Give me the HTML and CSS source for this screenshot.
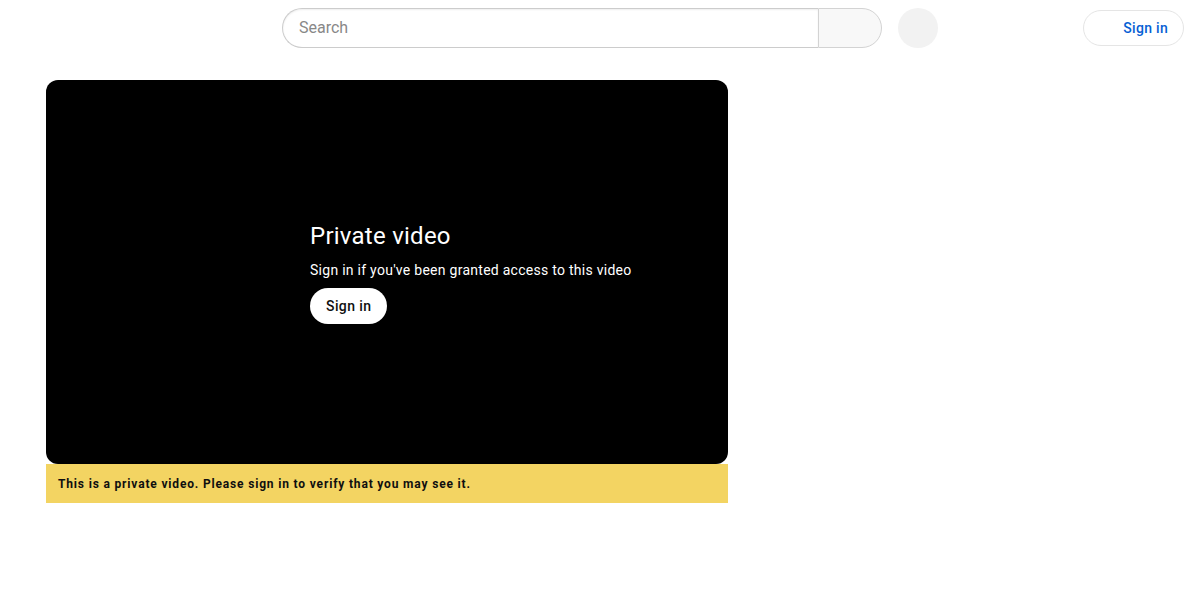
FILE: index.html
```html
<!DOCTYPE html>
<html lang="en">
<head>
<meta charset="utf-8">
<title>Private video</title>
<link rel="stylesheet" href="styles.css">
</head>
<body>
<header class="masthead">
  <div class="start"></div>
  <div class="center">
    <form class="search">
      <input class="search-input" type="text" placeholder="Search">
      <button class="search-btn" type="button"></button>
    </form>
    <button class="mic" type="button"></button>
  </div>
  <div class="spacer"></div>
  <a class="signin-top" href="#">Sign in</a>
</header>
<main class="page">
  <div class="player">
    <div class="error">
      <div class="error-title">Private video</div>
      <div class="error-sub">Sign in if you've been granted access to this video</div>
      <button class="error-btn" type="button">Sign in</button>
    </div>
  </div>
  <div class="notice">This is a private video. Please sign in to verify that you may see it.</div>
</main>
</body>
</html>
```
FILE: styles.css
```css
* { box-sizing: border-box; }
html, body { margin: 0; padding: 0; background: #fff; }
body { font-family: Roboto, "Noto Sans", Arial, sans-serif; color: #0f0f0f; }

.masthead {
  display: flex;
  align-items: center;
  height: 56px;
  padding: 0 16px;
}
.start { width: 266px; flex: none; }
.center { display: flex; align-items: center; }
.search { display: flex; margin: 0; }
.search-input {
  width: 536px;
  height: 40px;
  border: 1px solid #ccc;
  border-right: none;
  border-radius: 40px 0 0 40px;
  padding: 0 16px 1px;
  font-family: Roboto, Arial, sans-serif;
  font-size: 16px;
  outline: none;
  box-shadow: inset 0 1px 2px #eee;
}
.search-input::placeholder { color: #888; }
.search-btn {
  width: 64px;
  height: 40px;
  border: 1px solid #d3d3d3;
  border-radius: 0 40px 40px 0;
  background: #f8f8f8;
  padding: 0;
}
.mic {
  width: 40px;
  height: 40px;
  margin-left: 16px;
  border: none;
  border-radius: 50%;
  background: #f2f2f2;
  padding: 0;
}
.spacer { flex: 1; }
.signin-top {
  display: flex;
  align-items: center;
  height: 36px;
  padding: 0 15px 0 39px;
  border: 1px solid #e5e5e5;
  border-radius: 18px;
  color: #065fd4;
  font-size: 14px;
  font-weight: 500;
  letter-spacing: 0.3px;
  text-decoration: none;
}

.page { margin: 24px 0 0 46px; width: 682px; }
.player {
  height: 384px;
  background: #000;
  border-radius: 12px;
  display: flex;
  flex-direction: column;
  justify-content: center;
  padding-left: 264px;
}
.error { color: #fff; }
.error-title { font-size: 24px; line-height: 28px; letter-spacing: 0.25px; margin-top: 2px; }
.error-sub { font-size: 14px; line-height: 20px; margin-top: 10px; letter-spacing: 0.27px; }
.error-btn {
  margin-top: 8px;
  height: 36px;
  padding: 0 16px;
  border: none;
  border-radius: 18px;
  background: #fff;
  color: #0f0f0f;
  font-family: Roboto, Arial, sans-serif;
  font-size: 14px;
  font-weight: 500;
  letter-spacing: 0.4px;
}
.notice {
  background: #f3d462;
  padding: 13px 12px 11px;
  font-size: 12px;
  line-height: 15px;
  font-weight: 700;
  letter-spacing: 0.83px;
  color: #0f0f0f;
}
```
